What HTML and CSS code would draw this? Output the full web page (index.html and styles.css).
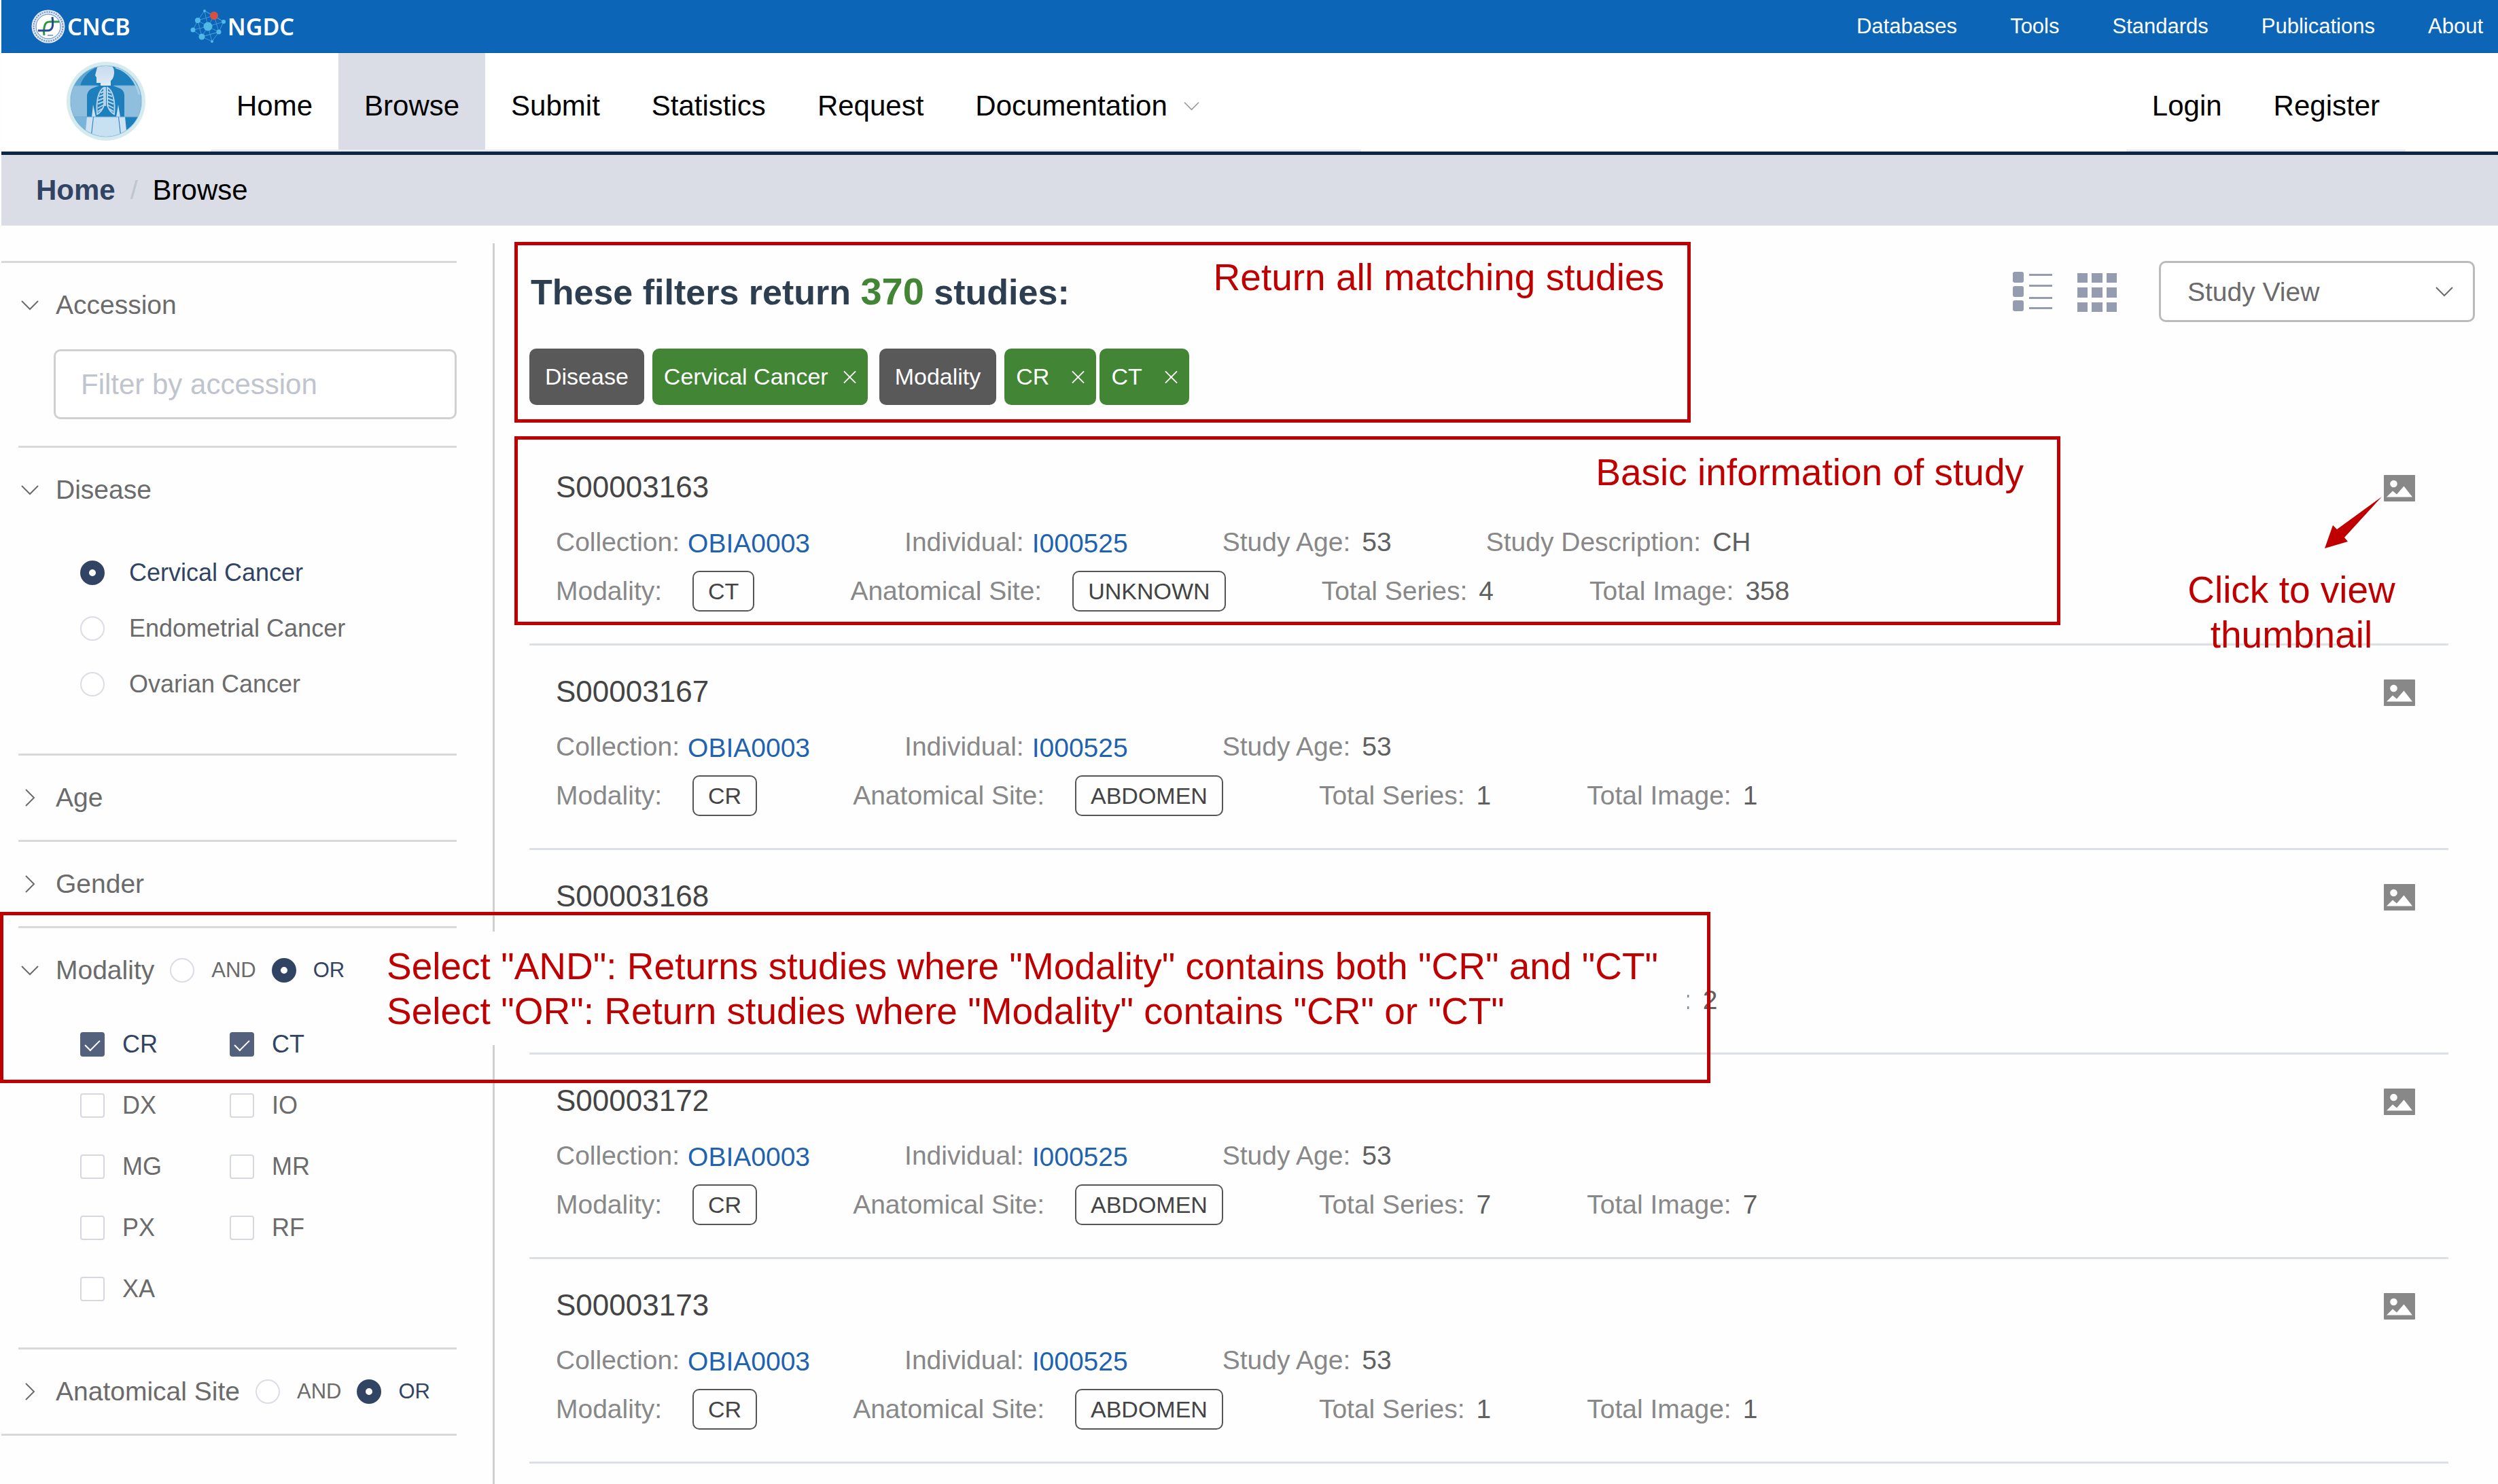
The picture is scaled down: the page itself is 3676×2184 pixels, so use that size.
FILE: index.html
```html
<!DOCTYPE html>
<html lang="en">
<head>
    <meta charset="UTF-8">
    <meta name="viewport" content="width=device-width, initial-scale=1.0">
    <title>Browse</title>
    <link rel="stylesheet" href="styles.css">
</head>
<body>
    <!-- shared icons -->
    <svg class="sprite" xmlns="http://www.w3.org/2000/svg">
        <symbol id="down" viewBox="0 0 26 16"><path d="M1 2l12 12L25 2" fill="none" stroke="currentColor" stroke-width="2"/></symbol>
        <symbol id="right" viewBox="0 0 16 26"><path d="M2 1l12 12L2 25" fill="none" stroke="currentColor" stroke-width="2"/></symbol>
        <symbol id="close" viewBox="0 0 20 20"><path d="M1 1l18 18M19 1L1 19" fill="none" stroke="currentColor" stroke-width="2"/></symbol>
        <symbol id="picture" viewBox="0 0 46 39">
            <rect width="46" height="39" rx="1" fill="#888"/>
            <ellipse cx="14.500" cy="13" rx="5.300" ry="5.300" fill="#fff"/>
            <path d="M4 32.500l9-9 6 5 10.500-12L42 32.500z" fill="#fff"/>
        </symbol>
    </svg>

    <div class="page">
        <div class="topbar">
            <a class="brand" href="#">
                <svg width="50" height="50" viewBox="0 0 50 50">
                    <circle cx="25" cy="25" r="24.500" fill="#dfe8f5"/>
                    <circle cx="25" cy="25" r="21.500" fill="none" stroke="#6a8cc0" stroke-width="2" stroke-dasharray="2 1.500"/>
                    <circle cx="25" cy="25" r="18" fill="#fff" stroke="#5e83bb" stroke-width="1"/>
                    <path d="M19 38c-1-7 0-12 1-15s3-5 7-5h14" fill="none" stroke="#2f9646" stroke-width="3"/>
                    <path d="M31 11c1 8 1 12 0 15s-3 5-7 5H10" fill="none" stroke="#1f4f93" stroke-width="3"/>
                    <path d="M24 38h8" stroke="#1f4f93" stroke-width="1"/>
                </svg>
                <span>CNCB</span>
            </a>
            <a class="brand" href="#">
                <svg width="52" height="50" viewBox="0 0 52 50">
                    <path d="M21 2L11 16 4 30l13 10 15 7 10-14 7-15L35 9zM11 16l15 9 16 8M4 30l22-5 23-7M17 40l9-15 9-16M21 2l5 23 6 22M11 16l6 24 25-7L35 9 11 16M21 2l28 16M17 40l25-7" fill="none" stroke="#3e9bd6" stroke-width="1"/>
                    <g fill="#52b9e6">
                        <circle cx="26" cy="25" r="6.500"/><circle cx="11" cy="16" r="4"/><circle cx="4" cy="30" r="3.500"/>
                        <circle cx="17" cy="40" r="4.500"/><circle cx="42" cy="33" r="3.500"/><circle cx="49" cy="18" r="3"/>
                        <circle cx="21" cy="2" r="2"/><circle cx="32" cy="47" r="2"/>
                    </g>
                    <circle cx="35" cy="9" r="6" fill="#d8513f"/>
                </svg>
                <span>NGDC</span>
            </a>
            <nav class="toplinks">
                <a href="#">Databases</a>
                <a href="#">Tools</a>
                <a href="#">Standards</a>
                <a href="#">Publications</a>
                <a href="#">About</a>
            </nav>
        </div>

        <header class="header">
            <a class="logo" href="#" aria-label="Home page">
                <svg width="116" height="118" viewBox="0 0 116 118">
                    <defs>
                        <clipPath id="disc"><circle cx="58" cy="59" r="52"/></clipPath>
                        <linearGradient id="head" x1="0" y1="0" x2="0" y2="1"><stop offset="0" stop-color="#c3dbee"/><stop offset="1" stop-color="#dfeaf7"/></linearGradient>
                    </defs>
                    <circle cx="58" cy="59" r="58" fill="#d5ebee"/>
                    <circle cx="58" cy="59" r="53" fill="#a9cfe6"/>
                    <g clip-path="url(#disc)">
                        <rect width="116" height="118" fill="#1e7fbd"/>
                        <rect y="36" width="116" height="46" fill="#90bedd"/>
                        <path d="M2 36C10 14 30 5 50 6c-14 6-26 16-30 30z" fill="#5fa5d2"/>
                        <path d="M0 82h30v36H0z" fill="#7ab4da"/>
                        <path d="M40 82h36l4 36H36z" fill="#c7e0f2"/>
                        <path d="M30 82h9l-3 26-8-6z" fill="#cfe2f3"/>
                        <path d="M77 82h9l2 20-8 6z" fill="#cfe2f3"/>
                        <path d="M30 82V50q1-8 10-11l8-3h20l8 3q9 3 9 11v32z" fill="#1e7fbd"/>
                        <path d="M39 64l4 18h-6zM76 64l3 18h-6z" fill="#c7e0f2"/>
                        <path d="M50 36v-4h-6v-8l-2-3 3-12q5-6 14-5 12 2 11 14-1 8-5 11v7z" fill="url(#head)"/>
                        <g fill="none" stroke="#b5d5ea" stroke-width="2">
                            <path d="M57 38v28"/>
                            <path d="M55 39c-8 4-12 20-10 39 4-2 8-7 10-13z"/>
                            <path d="M60 39c8 4 12 20 10 39-4-2-8-7-10-13z"/>
                            <path d="M56 44l-6 3M56 49l-8 3M56 54l-10 4M56 59l-10 4M55 64l-9 5M52 70l-6 4M59 44l6 3M59 49l8 3M59 54l10 4M59 59l10 4M60 64l9 5M63 70l6 4"/>
                        </g>
                        <path d="M4 82h108M4 36h40M70 36h42" stroke="#6cabd5" stroke-width="1"/>
                        <path d="M72 9c18 5 30 20 35 40" fill="none" stroke="#a9d2ea" stroke-width="3"/>
                    </g>
                </svg>
            </a>
            <nav class="menu">
                <a href="#">Home</a>
                <a class="active" href="#">Browse</a>
                <a href="#">Submit</a>
                <a href="#">Statistics</a>
                <a href="#">Request</a>
                <a href="#">Documentation <svg class="caret" width="23" height="14"><use href="#down"/></svg></a>
            </nav>
            <nav class="menu account">
                <a href="#">Login</a>
                <a href="#">Register</a>
            </nav>
        </header>

        <div class="breadcrumb">
            <a href="#">Home</a><i>/</i><span>Browse</span>
        </div>

        <div class="layout">
            <aside class="sidebar">
                <section class="filter">
                    <div class="filter-head">
                        <button class="toggle"><svg width="26" height="16"><use href="#down"/></svg><span>Accession</span></button>
                    </div>
                    <div class="accession-body">
                        <input type="text" placeholder="Filter by accession" aria-label="Filter by accession">
                    </div>
                </section>

                <section class="filter">
                    <div class="filter-head">
                        <button class="toggle"><svg width="26" height="16"><use href="#down"/></svg><span>Disease</span></button>
                    </div>
                    <div class="disease-body">
                        <label><input type="radio" name="disease" checked><span>Cervical Cancer</span></label>
                        <label><input type="radio" name="disease"><span>Endometrial Cancer</span></label>
                        <label><input type="radio" name="disease"><span>Ovarian Cancer</span></label>
                    </div>
                </section>

                <section class="filter">
                    <div class="filter-head">
                        <button class="toggle"><svg width="26" height="26"><use href="#right"/></svg><span>Age</span></button>
                    </div>
                </section>

                <section class="filter">
                    <div class="filter-head">
                        <button class="toggle"><svg width="26" height="26"><use href="#right"/></svg><span>Gender</span></button>
                    </div>
                </section>

                <section class="filter">
                    <div class="filter-head">
                        <button class="toggle"><svg width="26" height="16"><use href="#down"/></svg><span>Modality</span></button>
                        <label><input type="radio" name="modality-op"><span>AND</span></label>
                        <label><input type="radio" name="modality-op" checked><span>OR</span></label>
                    </div>
                    <div class="modality-body">
                        <label><input type="checkbox" checked><span>CR</span></label>
                        <label><input type="checkbox" checked><span>CT</span></label>
                        <label><input type="checkbox"><span>DX</span></label>
                        <label><input type="checkbox"><span>IO</span></label>
                        <label><input type="checkbox"><span>MG</span></label>
                        <label><input type="checkbox"><span>MR</span></label>
                        <label><input type="checkbox"><span>PX</span></label>
                        <label><input type="checkbox"><span>RF</span></label>
                        <label><input type="checkbox"><span>XA</span></label>
                    </div>
                </section>

                <section class="filter">
                    <div class="filter-head">
                        <button class="toggle"><svg width="26" height="26"><use href="#right"/></svg><span>Anatomical Site</span></button>
                        <label><input type="radio" name="site-op"><span>AND</span></label>
                        <label><input type="radio" name="site-op" checked><span>OR</span></label>
                    </div>
                </section>
            </aside>

            <main class="main">
                <div class="toolbar">
                    <h1>These filters return <b>370</b> studies:</h1>
                    <button class="view" aria-label="List view">
                        <svg width="58" height="60" viewBox="0 0 58 60" fill="#969cb0">
                            <rect y="1" width="16" height="16" rx="3"/><rect y="22" width="16" height="16" rx="3"/><rect y="43" width="16" height="16" rx="3"/>
                            <rect x="24" y="4" width="34" height="3"/><rect x="24" y="20" width="34" height="3"/><rect x="24" y="38" width="34" height="3"/><rect x="24" y="53" width="34" height="3"/>
                        </svg>
                    </button>
                    <button class="view" aria-label="Grid view">
                        <svg width="58" height="60" viewBox="0 0 58 60" fill="#969cb0">
                            <path d="M0 3h15v14H0zM21 3h16v14H21zM43 3h15v14H43zM0 24h15v15H0zM21 24h16v15H21zM43 24h15v15H43zM0 46h15v14H0zM21 46h16v14H21zM43 46h15v14H43z"/>
                        </svg>
                    </button>
                    <div class="select">
                        <select aria-label="View">
                            <option>Study View</option>
                        </select>
                        <svg width="26" height="16"><use href="#down"/></svg>
                    </div>
                </div>

                <div class="tags">
                    <span class="tag-name">Disease</span>
                    <button class="tag">Cervical Cancer<svg width="19" height="20"><use href="#close"/></svg></button>
                    <span class="tag-name">Modality</span>
                    <button class="tag wide">CR<svg width="19" height="20"><use href="#close"/></svg></button>
                    <button class="tag wide">CT<svg width="19" height="20"><use href="#close"/></svg></button>
                </div>

                <div class="studies">
                    <article class="study">
                        <div>
                            <h2>S00003163</h2>
                            <p class="fields"><span>Collection: <a href="#">OBIA0003</a></span><span>Individual: <a href="#">I000525</a></span><span>Study Age: <b>53</b></span><span>Study Description: <b>CH</b></span></p>
                            <p class="fields"><span>Modality: <em>CT</em></span><span>Anatomical Site: <em>UNKNOWN</em></span><span>Total Series: <b>4</b></span><span>Total Image: <b>358</b></span></p>
                        </div>
                        <button class="thumb" aria-label="View thumbnail"><svg width="46" height="39"><use href="#picture"/></svg></button>
                    </article>

                    <article class="study">
                        <div>
                            <h2>S00003167</h2>
                            <p class="fields"><span>Collection: <a href="#">OBIA0003</a></span><span>Individual: <a href="#">I000525</a></span><span>Study Age: <b>53</b></span></p>
                            <p class="fields"><span>Modality: <em>CR</em></span><span>Anatomical Site: <em>ABDOMEN</em></span><span>Total Series: <b>1</b></span><span>Total Image: <b>1</b></span></p>
                        </div>
                        <button class="thumb" aria-label="View thumbnail"><svg width="46" height="39"><use href="#picture"/></svg></button>
                    </article>

                    <article class="study covered">
                        <div>
                            <h2>S00003168</h2>
                            <p class="fields"></p>
                            <p class="fields"><span>: <b>2</b></span></p>
                        </div>
                        <button class="thumb" aria-label="View thumbnail"><svg width="46" height="39"><use href="#picture"/></svg></button>
                    </article>

                    <article class="study">
                        <div>
                            <h2>S00003172</h2>
                            <p class="fields"><span>Collection: <a href="#">OBIA0003</a></span><span>Individual: <a href="#">I000525</a></span><span>Study Age: <b>53</b></span></p>
                            <p class="fields"><span>Modality: <em>CR</em></span><span>Anatomical Site: <em>ABDOMEN</em></span><span>Total Series: <b>7</b></span><span>Total Image: <b>7</b></span></p>
                        </div>
                        <button class="thumb" aria-label="View thumbnail"><svg width="46" height="39"><use href="#picture"/></svg></button>
                    </article>

                    <article class="study">
                        <div>
                            <h2>S00003173</h2>
                            <p class="fields"><span>Collection: <a href="#">OBIA0003</a></span><span>Individual: <a href="#">I000525</a></span><span>Study Age: <b>53</b></span></p>
                            <p class="fields"><span>Modality: <em>CR</em></span><span>Anatomical Site: <em>ABDOMEN</em></span><span>Total Series: <b>1</b></span><span>Total Image: <b>1</b></span></p>
                        </div>
                        <button class="thumb" aria-label="View thumbnail"><svg width="46" height="39"><use href="#picture"/></svg></button>
                    </article>
                </div>
            </main>
        </div>

        <!-- red help notes laid over the page -->
        <div class="note note-filters">Return all matching studies</div>
        <div class="note note-study">Basic information of study</div>
        <div class="note note-modality">
            <p>Select "AND": Returns studies where "Modality" contains both "CR" and "CT"<br>Select "OR": Return studies where "Modality" contains "CR" or "CT"</p>
        </div>
        <div class="note-thumb">
            <svg width="84" height="76" viewBox="0 0 84 76"><path d="M84 0L18 48l-6-6L0 76l34-10-5-6z" fill="#c00000"/></svg>
            <p>Click to view<br>thumbnail</p>
        </div>
    </div>
</body>
</html>
```
FILE: styles.css
```css
* { box-sizing: border-box; }
body {
    margin: 0;
    font-family: "Liberation Sans", Arial, sans-serif;
    font-size: 39px;
    color: #6b6b6b;
    background: #fefefe;
}
a { color: inherit; text-decoration: none; }
button {
    padding: 0;
    border: none;
    background: none;
    font: inherit;
    color: inherit;
    cursor: pointer;
}
h1, h2, p { margin: 0; }
svg { display: block; flex: none; }
.sprite { position: absolute; width: 0; height: 0; }
.page {
    position: relative;
    display: flex;
    flex-direction: column;
    min-height: 100vh;
    padding-left: 2px;
}

/* top bar */
.topbar {
    display: flex;
    align-items: center;
    height: 78px;
    padding: 0 22px 0 44px;
    background: #0c65b6;
    border-bottom: 1px solid #0b579c;
    color: #fff;
}
.brand {
    display: flex;
    align-items: center;
    gap: 3px;
    margin-right: 88px;
    font-family: "Noto Sans", sans-serif;
    font-size: 34px;
    font-weight: 600;
}
.toplinks {
    display: flex;
    gap: 78px;
    margin-left: auto;
    font-size: 31px;
}

/* header */
.header {
    display: flex;
    height: 150px;
    padding-right: 136px;
    background: #fff;
    border-bottom: 5px solid #0a2748;
    color: #000;
}
.logo { margin: 12px 96px 0; }
.menu {
    display: flex;
    padding-right: 200px;
    border-bottom: 3px solid #eaeaea;
    font-size: 42px;
}
.menu a {
    display: flex;
    align-items: center;
    padding: 14px 38px 0;
}
.menu .active { background: #dadde5; }
.account { margin-left: auto; padding-right: 0; }
.caret { margin-left: 24px; color: #999; }

.breadcrumb {
    display: flex;
    align-items: center;
    height: 104px;
    padding-left: 51px;
    background: #dadde5;
    font-size: 42px;
    color: #000;
}
.breadcrumb a { color: #324463; font-weight: bold; }
.breadcrumb i {
    margin: 0 22px;
    font-size: 39px;
    font-style: normal;
    color: #c0c4cc;
}

/* filters */
.layout { display: flex; flex: 1; }
.sidebar {
    flex: none;
    align-self: flex-start;
    width: 670px;
    margin: 52px 53px 0 0;
    border-top: 3px solid #d9d9d9;
    border-bottom: 3px solid #d9d9d9;
}
.filter { margin-left: 25px; }
.filter + .filter { border-top: 3px solid #d9d9d9; }
.filter-head {
    display: flex;
    align-items: center;
    height: 124px;
}
.toggle {
    display: flex;
    align-items: center;
    gap: 25px;
    padding-left: 4px;
}
label { display: flex; align-items: center; }
.filter-head label {
    gap: 25px;
    margin-left: 23px;
    font-size: 31px;
}
input[type="radio"], input[type="checkbox"] {
    appearance: none;
    flex: none;
    width: 36px;
    height: 36px;
    margin: 0;
    border: 2px solid #dadde5;
    background: #fff;
}
input[type="radio"] { border-radius: 50%; }
input[type="checkbox"] { border-radius: 4px; border-color: #d5d8e1; }
input[type="radio"]:checked { border: 13px solid #324463; }
input[type="checkbox"]:checked {
    display: flex;
    justify-content: center;
    border-color: #53617d;
    background: #53617d;
}
input[type="checkbox"]:checked::after {
    content: "";
    width: 10px;
    height: 19px;
    margin-top: 4px;
    border: solid #fff;
    border-width: 0 2px 2px 0;
    transform: rotate(45deg);
}
input:checked + span { color: #324463; }
.accession-body { padding: 3px 0 39px 52px; }
.accession-body input {
    display: block;
    width: 100%;
    height: 103px;
    padding: 0 37px;
    border: 3px solid #d0d0d0;
    border-radius: 10px;
    background: #fff;
    font: inherit;
    font-size: 42px;
}
.accession-body input::placeholder { color: #c0c4cc; opacity: 1; }
.disease-body { padding: 19px 0 61px 91px; font-size: 36px; }
.disease-body label { gap: 36px; height: 82px; }
.modality-body {
    display: grid;
    grid-template-columns: 220px 220px;
    padding: 2px 0 41px 91px;
    font-size: 36px;
}
.modality-body label { gap: 26px; height: 90px; }

/* results */
.main {
    flex: 1;
    margin-top: 26px;
    padding: 26px 34px 0 51px;
    border-left: 3px solid #d0d0d0;
}
.toolbar { display: flex; align-items: center; height: 90px; }
.toolbar h1 {
    margin-right: auto;
    padding-left: 2px;
    font-size: 52px;
    line-height: 64px;
    color: #2c3e50;
}
.toolbar h1 b { font-size: 56px; color: #428534; }
.view { margin-right: 37px; }
.select { position: relative; margin-left: 25px; }
.select select {
    appearance: none;
    display: block;
    width: 465px;
    height: 90px;
    padding: 0 39px;
    border: 3px solid #bbb;
    border-radius: 10px;
    background: #fff;
    font: inherit;
    color: inherit;
}
.select svg {
    position: absolute;
    top: 37px;
    right: 32px;
    pointer-events: none;
}
.tags {
    display: flex;
    margin: 39px 0 53px;
    font-size: 34px;
    line-height: 83px;
    color: #fff;
}
.tag-name {
    margin-right: 12px;
    padding: 0 23px;
    border-radius: 10px;
    background: #595959;
}
.tag {
    display: flex;
    align-items: center;
    gap: 22px;
    margin-right: 17px;
    padding: 0 17px;
    border-radius: 10px;
    background: #428534;
}
.wide { gap: 33px; margin-right: 5px; }
.studies { margin-right: 39px; }
.study {
    display: flex;
    justify-content: space-between;
    align-items: flex-start;
    height: 301px;
    padding: 42px 49px 0 39px;
    border-bottom: 3px solid #dcdfe6;
}
.study h2 {
    margin-bottom: 25px;
    font-size: 44px;
    font-weight: normal;
    line-height: 52px;
    color: #444;
}
.fields {
    display: flex;
    gap: 139px;
    height: 60px;
    margin-bottom: 12px;
    line-height: 60px;
    color: #888;
}
.fields + .fields { gap: 141px; }
.fields span { display: flex; align-items: center; }
.fields a { margin-left: 12px; padding-top: 3px; color: #1f63b0; }
.fields b { margin-left: 17px; font-weight: normal; color: #606060; }
.fields em {
    margin-left: 45px;
    padding: 0 21px;
    border: 2px solid #555;
    border-radius: 10px;
    font-size: 34px;
    font-style: normal;
    line-height: 56px;
    color: #444;
}
.covered .fields { padding-left: 1660px; }
.thumb { margin-top: 8px; }

/* notes */
.note, .note-thumb {
    position: absolute;
    font-size: 55px;
    line-height: 66px;
    color: #c00000;
}
.note { border: 5px solid #c00000; }
.note-filters {
    top: 356px;
    left: 757px;
    width: 1731px;
    height: 266px;
    padding: 14px 34px;
    text-align: right;
}
.note-study {
    top: 642px;
    left: 757px;
    width: 2275px;
    height: 278px;
    padding: 15px 49px;
    text-align: right;
}
.note-modality {
    top: 1342px;
    left: 0;
    width: 2517px;
    height: 252px;
    padding: 24px 29px 0 545px;
}
.note-modality p {
    height: 167px;
    padding: 18px 0 0 19px;
    background: #fefefe;
}
.note-thumb {
    top: 731px;
    right: 141px;
    width: 326px;
    text-align: center;
}
.note-thumb svg { margin: 0 0 28px 212px; }
```
